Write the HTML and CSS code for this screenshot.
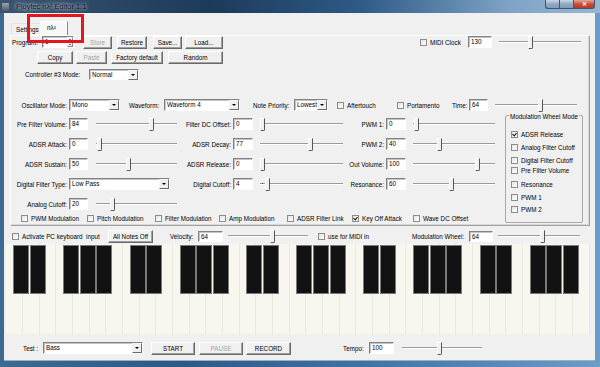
FILE: index.html
```html
<!DOCTYPE html>
<html lang="en">

<head>
  <meta charset="UTF-8">
  <meta name="viewport" content="width=device-width, initial-scale=1.0">
  <title>Ploytec nλ² Editor 1.1</title>
  <link rel="stylesheet" href="styles.css">
</head>

<body>
  <div class="window">
    <div class="titlebar">
      <span class="app-icon"></span>
      <span class="title">Ploytec nλ² Editor 1.1</span>
      <div class="caption">
        <span class="cap cap-min"></span>
        <span class="cap cap-max"></span>
        <span class="cap cap-close">✕</span>
      </div>
    </div>

    <div class="client">
      <div class="tabs">
        <span class="tab">Settings</span>
        <span class="tab active">nλ²</span>
      </div>

      <div class="panel">
        <!-- program row -->
        <div class="row r-program">
          <span class="lbl l-program">Program:</span>
          <span class="spin">1<span class="spin-btns"><i class="up"></i><i class="down"></i></span></span>
          <span class="btn disabled b-store">Store</span>
          <span class="btn b-restore">Restore</span>
          <span class="btn b-save">Save...</span>
          <span class="btn b-load">Load...</span>
          <span class="check c-midi"><i class="box"></i>MIDI Clock</span>
          <span class="edit e-midi">130</span>
          <span class="slider s-midi"><i class="thumb" style="left:35%"></i></span>
        </div>

        <div class="row r-edit">
          <span class="btn b-copy">Copy</span>
          <span class="btn disabled b-paste">Paste</span>
          <span class="btn b-factory">Factory default</span>
          <span class="btn b-random">Random</span>
        </div>

        <div class="row r-ctrl">
          <span class="lbl l-ctrl">Controller #3 Mode:</span>
          <span class="combo w-ctrl">Normal<i class="drop"></i></span>
        </div>

        <div class="row r-osc">
          <span class="lbl right l-osc">Oscillator Mode:</span>
          <span class="combo w-osc">Mono<i class="drop"></i></span>
          <span class="lbl l-wave">Waveform:</span>
          <span class="combo w-wave">Waveform 4<i class="drop"></i></span>
          <span class="lbl l-prio">Note Priority:</span>
          <span class="combo w-prio">Lowest<i class="drop"></i></span>
          <span class="check c-after"><i class="box"></i>Aftertouch</span>
          <span class="check c-porta"><i class="box"></i>Portamento</span>
          <span class="lbl l-time">Time:</span>
          <span class="edit e-time">64</span>
          <span class="slider s-time"><i class="thumb" style="left:52%"></i></span>
        </div>

        <div class="main">
          <div class="fields">
            <div class="frow">
              <div class="field c1"><span class="lbl">Pre Filter Volume:</span><span class="edit">84</span><span class="slider"><i class="thumb" style="left:65%"></i></span></div>
              <div class="field c2"><span class="lbl">Filter DC Offset:</span><span class="edit">0</span><span class="slider"><i class="thumb" style="left:0%"></i></span></div>
              <div class="field c3"><span class="lbl">PWM 1:</span><span class="edit">0</span><span class="slider"><i class="thumb" style="left:1%"></i></span></div>
            </div>
            <div class="frow">
              <div class="field c1"><span class="lbl">ADSR Attack:</span><span class="edit">0</span><span class="slider"><i class="thumb" style="left:1%"></i></span></div>
              <div class="field c2"><span class="lbl">ADSR Decay:</span><span class="edit">77</span><span class="slider"><i class="thumb" style="left:58%"></i></span></div>
              <div class="field c3"><span class="lbl">PWM 2:</span><span class="edit">40</span><span class="slider"><i class="thumb" style="left:29%"></i></span></div>
            </div>
            <div class="frow">
              <div class="field c1"><span class="lbl">ADSR Sustain:</span><span class="edit">50</span><span class="slider"><i class="thumb" style="left:37%"></i></span></div>
              <div class="field c2"><span class="lbl">ADSR Release:</span><span class="edit">0</span><span class="slider"><i class="thumb" style="left:0%"></i></span></div>
              <div class="field c3"><span class="lbl">Out Volume:</span><span class="edit">100</span><span class="slider"><i class="thumb" style="left:76%"></i></span></div>
            </div>
            <div class="frow">
              <div class="field c1"><span class="lbl">Digital Filter Type:</span><span class="combo w-type">Low Pass<i class="drop"></i></span></div>
              <div class="field c2"><span class="lbl">Digital Cutoff:</span><span class="edit">4</span><span class="slider tick"><i class="thumb" style="left:6%"></i></span></div>
              <div class="field c3"><span class="lbl">Resonance:</span><span class="edit">60</span><span class="slider"><i class="thumb" style="left:44%"></i></span></div>
            </div>
            <div class="frow">
              <div class="field c1"><span class="lbl">Analog Cutoff:</span><span class="edit">20</span><span class="slider"><i class="thumb" style="left:17%"></i></span></div>
            </div>
            <div class="checks">
              <span class="check k-pwm"><i class="box"></i>PWM Modulation</span>
              <span class="check k-pitch"><i class="box"></i>Pitch Modulation</span>
              <span class="check k-filter"><i class="box"></i>Filter Modulation</span>
              <span class="check k-amp"><i class="box"></i>Amp Modulation</span>
              <span class="check k-adsr"><i class="box"></i>ADSR Filter Link</span>
              <span class="check k-keyoff"><i class="box on"></i>Key Off Attack</span>
              <span class="check"><i class="box"></i>Wave DC Offset</span>
            </div>
          </div>

          <fieldset class="modwheel">
            <legend>Modulation Wheel Mode</legend>
            <span class="check"><i class="box on"></i>ADSR Release</span>
            <span class="check"><i class="box"></i>Analog Filter Cutoff</span>
            <span class="check"><i class="box"></i>Digital Filter Cutoff</span>
            <span class="check m-pfv"><i class="box"></i>Pre Filter Volume</span>
            <span class="check m-res"><i class="box"></i>Resonance</span>
            <span class="check"><i class="box"></i>PWM 1</span>
            <span class="check m-pwm2"><i class="box"></i>PWM 2</span>
          </fieldset>
        </div>
      </div>

      <div class="row r-kbd">
        <span class="check k-activate"><i class="box"></i>Activate PC keyboard&nbsp; input</span>
        <span class="btn b-notes">All Notes Off</span>
        <span class="lbl l-vel">Velocity:</span>
        <span class="edit e-vel">64</span>
        <span class="slider s-vel"><i class="thumb" style="left:52%"></i></span>
        <span class="check k-midiin"><i class="box"></i>use for MIDI in</span>
        <span class="lbl l-mod">Modulation Wheel:</span>
        <span class="edit e-mod">64</span>
        <span class="slider s-mod"><i class="thumb" style="left:51%"></i></span>
      </div>

      <div class="piano">
        <span class="wk b"></span><span class="wk b"></span><span class="wk"></span><span class="wk b"></span><span class="wk b"></span><span class="wk b"></span><span class="wk"></span>
        <span class="wk b"></span><span class="wk b"></span><span class="wk"></span><span class="wk b"></span><span class="wk b"></span><span class="wk b"></span><span class="wk"></span>
        <span class="wk b"></span><span class="wk b"></span><span class="wk"></span><span class="wk b"></span><span class="wk b"></span><span class="wk b"></span><span class="wk"></span>
        <span class="wk b"></span><span class="wk b"></span><span class="wk"></span><span class="wk b"></span><span class="wk b"></span><span class="wk b"></span><span class="wk"></span>
        <span class="wk b"></span><span class="wk b"></span><span class="wk"></span><span class="wk b"></span><span class="wk b"></span><span class="wk b"></span><span class="wk"></span>
      </div>

      <div class="row r-test">
        <span class="lbl l-test">Test :</span>
        <span class="combo w-test">Bass<i class="drop"></i></span>
        <span class="btn b-start">START</span>
        <span class="btn disabled b-pause">PAUSE</span>
        <span class="btn b-record">RECORD</span>
        <span class="lbl l-tempo">Tempo:</span>
        <span class="edit e-tempo">100</span>
        <span class="slider s-tempo"><i class="thumb" style="left:44%"></i></span>
      </div>
    </div>

    <!-- red marker round the tab -->
    <div class="marker"></div>
  </div>
</body>

</html>
```

FILE: styles.css
```css
* {
  box-sizing: border-box;
}

body {
  margin: 0;
  width: 600px;
  height: 367px;
  overflow: hidden;
  font-family: 'Liberation Sans', Arial, sans-serif;
  font-size: 6.3px;
  color: #000;
}

.window {
  position: relative;
  width: 600px;
  height: 367px;
  display: flex;
  flex-direction: column;
  background: linear-gradient(90deg, #3d6a92 0%, #2c5a86 30%, #3f72a3 60%, #6c9cc8 100%);
}

/* title bar */
.titlebar {
  height: 13px;
  display: flex;
  align-items: center;
  padding-left: 2px;
  background: linear-gradient(90deg, #3a5470 0%, #1c3a5a 35%, #2e5a86 60%, #7ea3c6 85%, #9ab6cf 100%);
}

.app-icon {
  width: 7px;
  height: 8px;
  border-radius: 1px;
  background: linear-gradient(#9aa4ad, #4e5962);
}

.title {
  margin-left: 7px;
  font-size: 7.4px;
  color: #101010;
  text-shadow: 0 0 3px #d3dde7, 0 0 5px #d3dde7;
}

.caption {
  margin-left: auto;
  margin-right: 5px;
  align-self: flex-start;
  display: flex;
}

.cap {
  height: 9px;
  border: 1px solid #3e5670;
  border-top: 0;
  background: linear-gradient(#c9d7e5, #90aac3 50%, #7f9bb8);
}

.cap-min,
.cap-max {
  width: 14px;
  border-right: 0;
}

.cap-min {
  border-bottom-left-radius: 3px;
}

.cap-close {
  width: 22px;
  border-bottom-right-radius: 3px;
  background: linear-gradient(#e8a595, #c7503c 50%, #b8382a);
  color: #fff;
  font-size: 6px;
  line-height: 8px;
  text-align: center;
  font-weight: bold;
}

/* client area */
.client {
  margin: 0 5px 6px 4px;
  height: 348px;
  background: #f0f0f0;
  border-bottom: 1px solid #9ab0c6;
}

.tabs {
  height: 22px;
  display: flex;
  align-items: flex-end;
  padding-left: 7px;
}

.tab {
  height: 12px;
  width: 30px;
  padding-left: 4px;
  line-height: 11px;
  border: 1px solid #e2e2e2;
  border-bottom: 0;
}

.tab.active {
  height: 14px;
  width: 28px;
  margin-left: -1px;
  padding-left: 6px;
  line-height: 12px;
  background: #f7f7f7;
  border-color: #fff #8a8a8a #8a8a8a #fff;
}

.panel {
  margin-left: 6px;
  width: 580px;
  height: 191px;
  border: 1px solid;
  border-color: #fff #a0a0a0 #a0a0a0 #fff;
  box-shadow: inset -1px -1px #d8d8d8;
}

.row {
  display: flex;
  align-items: center;
}

.lbl {
  white-space: nowrap;
}

.lbl.right {
  text-align: right;
  padding-right: 2px;
}

/* controls */
.btn {
  height: 13px;
  display: flex;
  align-items: center;
  justify-content: center;
  background: #f0f0f0;
  border: 1px solid;
  border-color: #fff #6a6a6a #6a6a6a #fff;
  box-shadow: inset -1px -1px #a0a0a0;
}

.btn.disabled {
  color: #a4a4a4;
}

.edit,
.spin,
.combo {
  position: relative;
  height: 12px;
  padding-left: 2px;
  line-height: 10px;
  background: #fff;
  border: 1px solid;
  border-color: #828282 #fff #fff #828282;
  box-shadow: inset 1px 1px #c4c4c4;
  white-space: nowrap;
}

.spin-btns {
  position: absolute;
  right: 0;
  top: 0;
  width: 6px;
  height: 10px;
  display: flex;
  flex-direction: column;
}

.spin-btns i {
  flex: 1;
  background: #ececec;
  border: 1px solid;
  border-color: #fff #888 #888 #fff;
  position: relative;
}

.spin-btns i::after {
  content: '';
  position: absolute;
  left: 1px;
  top: 1px;
  border: 1px solid transparent;
}

.spin-btns .up::after {
  border-bottom-color: #000;
  top: 0;
}

.spin-btns .down::after {
  border-top-color: #000;
}

.drop {
  position: absolute;
  right: 0;
  top: 0;
  width: 10px;
  height: 10px;
  background: #f0f0f0;
  border: 1px solid;
  border-color: #f6f6f6 #6a6a6a #6a6a6a #f6f6f6;
}

.drop::after {
  content: '';
  position: absolute;
  left: 2px;
  top: 3px;
  border-left: 2px solid transparent;
  border-right: 2px solid transparent;
  border-top: 2px solid #000;
}

.check {
  display: flex;
  align-items: center;
  white-space: nowrap;
}

.box {
  position: relative;
  width: 7px;
  height: 7px;
  margin-right: 3px;
  flex-shrink: 0;
  background: linear-gradient(135deg, #e4e4e4, #fff);
  border: 1px solid #8c8c8c;
}

.box.on::after {
  content: '';
  position: absolute;
  left: 1px;
  top: 0;
  width: 2px;
  height: 3px;
  border: solid #111;
  border-width: 0 1px 1px 0;
  transform: rotate(40deg);
}

.slider {
  position: relative;
  height: 12px;
}

.slider::before {
  content: '';
  position: absolute;
  left: 0;
  right: 0;
  top: 5px;
  height: 1px;
  background: #9a9a9a;
  box-shadow: 0 1px #fff;
}

.slider.tick::after {
  content: '';
  position: absolute;
  left: 2px;
  top: 5px;
  width: 1px;
  height: 1px;
  background: #555;
}

.thumb {
  position: absolute;
  top: 0;
  width: 5px;
  height: 13px;
  background: #f0f0f0;
  border: 1px solid;
  border-color: #fff #555 #555 #fff;
  border-bottom-right-radius: 2px;
}

/* program row */
.r-program {
  margin-top: -1px;
  height: 14px;
}

.l-program {
  margin-left: 1px;
  width: 30px;
}

.spin {
  width: 32px;
}

.b-store {
  margin-left: 9px;
  width: 29px;
}

.b-restore {
  margin-left: 5px;
  width: 30px;
}

.b-save {
  margin-left: 6px;
  width: 29px;
}

.b-load {
  margin-left: 3px;
  width: 38px;
}

.c-midi {
  margin-left: 197px;
  width: 48px;
}

.e-midi {
  width: 24px;
}

.s-midi {
  margin-left: 7px;
  width: 82px;
}

.r-edit {
  margin-top: 1px;
  height: 14px;
}

.b-copy {
  margin-left: 26px;
  width: 36px;
}

.b-paste {
  margin-left: 3px;
  width: 31px;
}

.b-factory {
  margin-left: 4px;
  width: 52px;
}

.b-random {
  margin-left: 5px;
  width: 55px;
}

.r-ctrl {
  margin-top: 4px;
  height: 12px;
}

.l-ctrl {
  margin-left: 14px;
  width: 64px;
}

.w-ctrl {
  width: 50px;
  height: 11px;
}

.r-osc {
  margin-top: 19px;
  height: 12px;
}

.l-osc {
  margin-left: 10px;
  width: 48px;
}

.w-osc {
  width: 51px;
}

.l-wave {
  margin-left: 9px;
  width: 35px;
}

.w-wave {
  width: 76px;
}

.l-prio {
  margin-left: 13px;
  width: 41px;
}

.w-prio {
  width: 34px;
}

.c-after {
  margin-left: 9px;
  width: 60px;
}

.c-porta {
  width: 55px;
}

.l-time {
  width: 17px;
}

.e-time {
  width: 19px;
}

.s-time {
  margin-left: 7px;
  width: 82px;
}

/* slider fields */
.main {
  margin-top: 7px;
  display: flex;
}

.fields {
  width: 494px;
}

.frow {
  display: flex;
  height: 12px;
  margin-top: 8px;
}

.frow:first-child {
  margin-top: 0;
}

.field {
  display: flex;
  align-items: center;
}

.field .lbl {
  text-align: right;
  padding-right: 2px;
}

.field .edit {
  width: 20px;
}

.field .slider {
  margin-left: 7px;
  width: 82px;
}

.c1 {
  width: 169px;
}

.c1 .lbl {
  width: 58px;
}

.c1 .edit {
  width: 19px;
}

.c1 .slider {
  margin-left: 8px;
  width: 81px;
}

.c2 {
  width: 166px;
}

.c2 .lbl {
  width: 53px;
}

.c2 .slider {
  width: 83px;
}

.c3 .lbl {
  width: 40px;
}

.w-type {
  width: 101px;
}

.checks {
  display: flex;
  align-items: center;
  height: 10px;
  margin-top: 3px;
  padding-left: 10px;
}

.k-pwm {
  width: 66px;
}

.k-pitch {
  width: 68px;
}

.k-filter {
  width: 64px;
}

.k-amp {
  width: 68px;
}

.k-adsr {
  width: 65px;
}

.k-keyoff {
  width: 61px;
}

/* modulation wheel group */
.modwheel {
  margin: -3px 0 0;
  width: 78px;
  height: 108px;
  padding: 13px 0 0 5px;
  border: 1px solid #a8a8a8;
  border-radius: 2px;
  display: flex;
  flex-direction: column;
  gap: 3px;
  position: relative;
}

.modwheel legend {
  position: absolute;
  top: -3px;
  left: 3px;
  padding: 0 1px;
  background: #f0f0f0;
  white-space: nowrap;
}

.modwheel .check {
  height: 10px;
}

.modwheel .m-pfv {
  margin-top: -3px;
}

.modwheel .m-res {
  margin-top: 1px;
}

.modwheel .m-pwm2 {
  margin-top: -1px;
}

/* keyboard row */
.r-kbd {
  margin-top: 3px;
  height: 14px;
}

.k-activate {
  margin-left: 8px;
  width: 96px;
}

.b-notes {
  width: 45px;
}

.l-vel {
  margin-left: 17px;
  width: 28px;
}

.e-vel {
  width: 25px;
  height: 11px;
}

.s-vel {
  margin-left: 5px;
  width: 80px;
}

.k-midiin {
  margin-left: 10px;
  width: 94px;
}

.l-mod {
  width: 57px;
}

.e-mod {
  width: 24px;
  height: 11px;
}

.s-mod {
  margin-left: 5px;
  width: 82px;
}

/* piano */
.piano {
  margin: 1px 0 0 2.3px;
  width: 583.4px;
  height: 90px;
  display: flex;
  background: #f8f7ef;
}

.wk {
  flex: 1;
  position: relative;
  border-right: 1px solid #ebe9de;
}

.wk.b::after {
  content: '';
  position: absolute;
  right: -7px;
  top: 1px;
  width: 14px;
  height: 47px;
  background: #121212;
  border: 1px solid #7a7a7a;
  z-index: 1;
}

/* test row */
.r-test {
  margin-top: 7px;
  height: 14px;
}

.l-test {
  margin-left: 19px;
  width: 20px;
}

.w-test {
  width: 100px;
}

.b-start {
  margin-left: 8px;
  width: 44px;
}

.b-pause {
  margin-left: 4px;
  width: 44px;
}

.b-record {
  margin-left: 3px;
  width: 45px;
}

.l-tempo {
  margin-left: 52px;
  width: 26px;
}

.e-tempo {
  width: 25px;
}

.s-tempo {
  margin-left: 8px;
  width: 80px;
}

.marker {
  position: absolute;
  left: 27px;
  top: 14px;
  width: 57px;
  height: 29px;
  border: 3px solid #e3161c;
}
```
